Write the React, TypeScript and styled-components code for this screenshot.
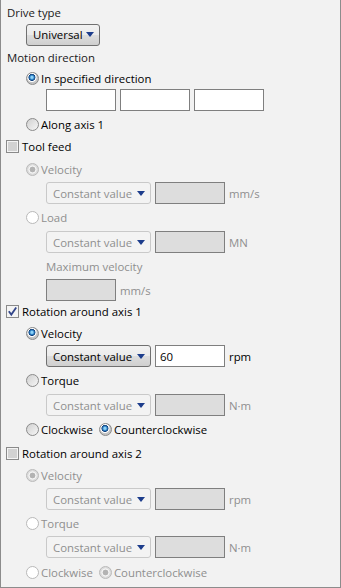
import styled, { createGlobalStyle } from "styled-components";

const GlobalStyle = createGlobalStyle`
  html, body {
    margin: 0;
    padding: 0;
    background: #f2f2f2;
  }
`;

interface RowProps {
  $h: number;
  $indent: number;
  $gap?: number;
}

interface StateProps {
  $checked?: boolean;
  $disabled?: boolean;
}

function App() {
  return (
    <>
      <GlobalStyle />
      <Panel>
        <Row $h={22} $indent={6}>
          <Heading>Drive type</Heading>
        </Row>
        <Row $h={23} $indent={25}>
          <DropButton $width={74}>
            Universal
            <Arrow />
          </DropButton>
        </Row>
        <Row $h={22} $indent={6}>
          <Heading>Motion direction</Heading>
        </Row>
        <Row $h={20} $indent={25}>
          <Radio label="In specified direction" checked />
        </Row>
        <Row $h={24} $indent={45}>
          <Field />
          <Field />
          <Field />
        </Row>
        <Row $h={24} $indent={25}>
          <Radio label="Along axis 1" />
        </Row>

        <Row $h={21} $indent={5}>
          <Check label="Tool feed" />
        </Row>
        <Row $h={24} $indent={25}>
          <Radio label="Velocity" checked disabled />
        </Row>
        <ValueRow unit="mm/s" disabled />
        <Row $h={25} $indent={25}>
          <Radio label="Load" disabled />
        </Row>
        <ValueRow unit="MN" disabled />
        <Row $h={25} $indent={45}>
          <Label $disabled>Maximum velocity</Label>
        </Row>
        <Row $h={22} $indent={45}>
          <Field $disabled />
          <Label $disabled>mm/s</Label>
        </Row>

        <Row $h={21} $indent={5}>
          <Check label="Rotation around axis 1" checked />
        </Row>
        <Row $h={22} $indent={25}>
          <Radio label="Velocity" checked />
        </Row>
        <ValueRow unit="rpm" value="60" />
        <Row $h={25} $indent={25}>
          <Radio label="Torque" />
        </Row>
        <ValueRow unit="N·m" disabled />
        <Row $h={25} $indent={25} $gap={6}>
          <Radio label="Clockwise" />
          <Radio label="Counterclockwise" checked />
        </Row>

        <Row $h={22} $indent={5}>
          <Check label="Rotation around axis 2" />
        </Row>
        <Row $h={23} $indent={25}>
          <Radio label="Velocity" checked disabled />
        </Row>
        <ValueRow unit="rpm" disabled />
        <Row $h={24} $indent={25}>
          <Radio label="Torque" disabled />
        </Row>
        <ValueRow unit="N·m" disabled />
        <Row $h={26} $indent={25} $gap={6}>
          <Radio label="Clockwise" disabled />
          <Radio label="Counterclockwise" checked disabled />
        </Row>
      </Panel>
    </>
  );
}

function Radio({ label, checked, disabled }: { label: string; checked?: boolean; disabled?: boolean }) {
  return (
    <Option>
      <RadioDot $checked={checked} $disabled={disabled} />
      <Label $disabled={disabled}>{label}</Label>
    </Option>
  );
}

function Check({ label, checked }: { label: string; checked?: boolean }) {
  return (
    <Option $gap={3}>
      <CheckBox $checked={checked}>
        {checked && (
          <svg width="11" height="11" viewBox="0 0 11 11">
            <path d="M1.8 5.2 L4.3 8.6 L9.2 1.4" fill="none" stroke="#33468a" strokeWidth="1.8" />
          </svg>
        )}
      </CheckBox>
      <Label>{label}</Label>
    </Option>
  );
}

function ValueRow({ unit, value, disabled }: { unit: string; value?: string; disabled?: boolean }) {
  return (
    <Row $h={24} $indent={45}>
      <DropButton $width={105} $disabled={disabled}>
        Constant value
        <Arrow />
      </DropButton>
      <Field $disabled={disabled}>{value}</Field>
      <Label $disabled={disabled}>{unit}</Label>
    </Row>
  );
}

const Panel = styled.div`
  box-sizing: border-box;
  width: 341px;
  height: 588px;
  padding-top: 1px;
  background: #f2f2f2;
  border: 1px solid #8c8c8c;
  border-top: none;
  display: flex;
  flex-direction: column;
  font-family: "Open Sans", "Noto Sans", sans-serif;
  font-size: 11.4px;
  color: #000;
  overflow: hidden;
`;

const Row = styled.div<RowProps>`
  height: ${(p) => p.$h}px;
  flex: none;
  display: flex;
  align-items: center;
  gap: ${(p) => p.$gap ?? 4}px;
  padding-left: ${(p) => p.$indent}px;
`;

const Heading = styled.span`
  color: #1a1a1a;
  white-space: nowrap;
`;

const Label = styled.span<{ $disabled?: boolean }>`
  color: ${(p) => (p.$disabled ? "#8f8f8f" : "#000")};
  white-space: nowrap;
`;

const Option = styled.label<{ $gap?: number }>`
  display: flex;
  align-items: center;
  gap: ${(p) => p.$gap ?? 2}px;
`;

const RadioDot = styled.span<StateProps>`
  box-sizing: border-box;
  width: 13px;
  height: 13px;
  border-radius: 50%;
  flex: none;
  border: 1px solid ${(p) => (p.$disabled ? "#b9b9b9" : "#8a8a8a")};
  background: ${(p) => {
    if (p.$disabled && p.$checked)
      return "radial-gradient(circle, #b3b3b3 0 2.6px, #f4f4f4 3.2px 3.8px, #dcdcdc 4.4px)";
    if (p.$disabled) return "#ffffff";
    if (p.$checked)
      return "radial-gradient(circle at 45% 40%, #8fd3f8 0 1px, #2a7fc4 2.2px, #123f7a 3.2px, #ffffff 3.8px 4.2px, #c4c4c4 5px)";
    return "linear-gradient(135deg, #d0d0d0, #f6f6f6)";
  }};
`;

const CheckBox = styled.span<StateProps>`
  box-sizing: border-box;
  width: 13px;
  height: 13px;
  flex: none;
  display: flex;
  align-items: center;
  justify-content: center;
  border: 1px solid #8a8a8a;
  background: ${(p) => (p.$checked ? "#f4f4f4" : "#ffffff")};
  box-shadow: ${(p) => (p.$checked ? "none" : "inset 0 0 0 1px #f4f4f4, inset 0 0 0 6px #d2d2d2")};
`;

const DropButton = styled.div<{ $width: number; $disabled?: boolean }>`
  box-sizing: border-box;
  width: ${(p) => p.$width}px;
  height: 22px;
  flex: none;
  display: flex;
  align-items: center;
  justify-content: space-between;
  padding: 0 5px 0 6px;
  border-radius: 3px;
  white-space: nowrap;
  color: ${(p) => (p.$disabled ? "#8f8f8f" : "#000")};
  border: 1px solid ${(p) => (p.$disabled ? "#c9c9c9" : "#707070")};
  background: ${(p) =>
    p.$disabled
      ? "#f3f3f3"
      : "linear-gradient(#f2f2f2 0%, #ebebeb 50%, #dddddd 51%, #cfcfcf 100%)"};
`;

const Arrow = styled.span`
  width: 0;
  height: 0;
  flex: none;
  border-left: 4.5px solid transparent;
  border-right: 4.5px solid transparent;
  border-top: 5px solid #1d3d8c;
`;

const Field = styled.div<{ $disabled?: boolean }>`
  box-sizing: border-box;
  width: 70px;
  height: 22px;
  flex: none;
  display: flex;
  align-items: center;
  padding-left: 4px;
  border: 1px solid #7f7f7f;
  background: ${(p) => (p.$disabled ? "#dddddd" : "#ffffff")};
`;

export default App;
